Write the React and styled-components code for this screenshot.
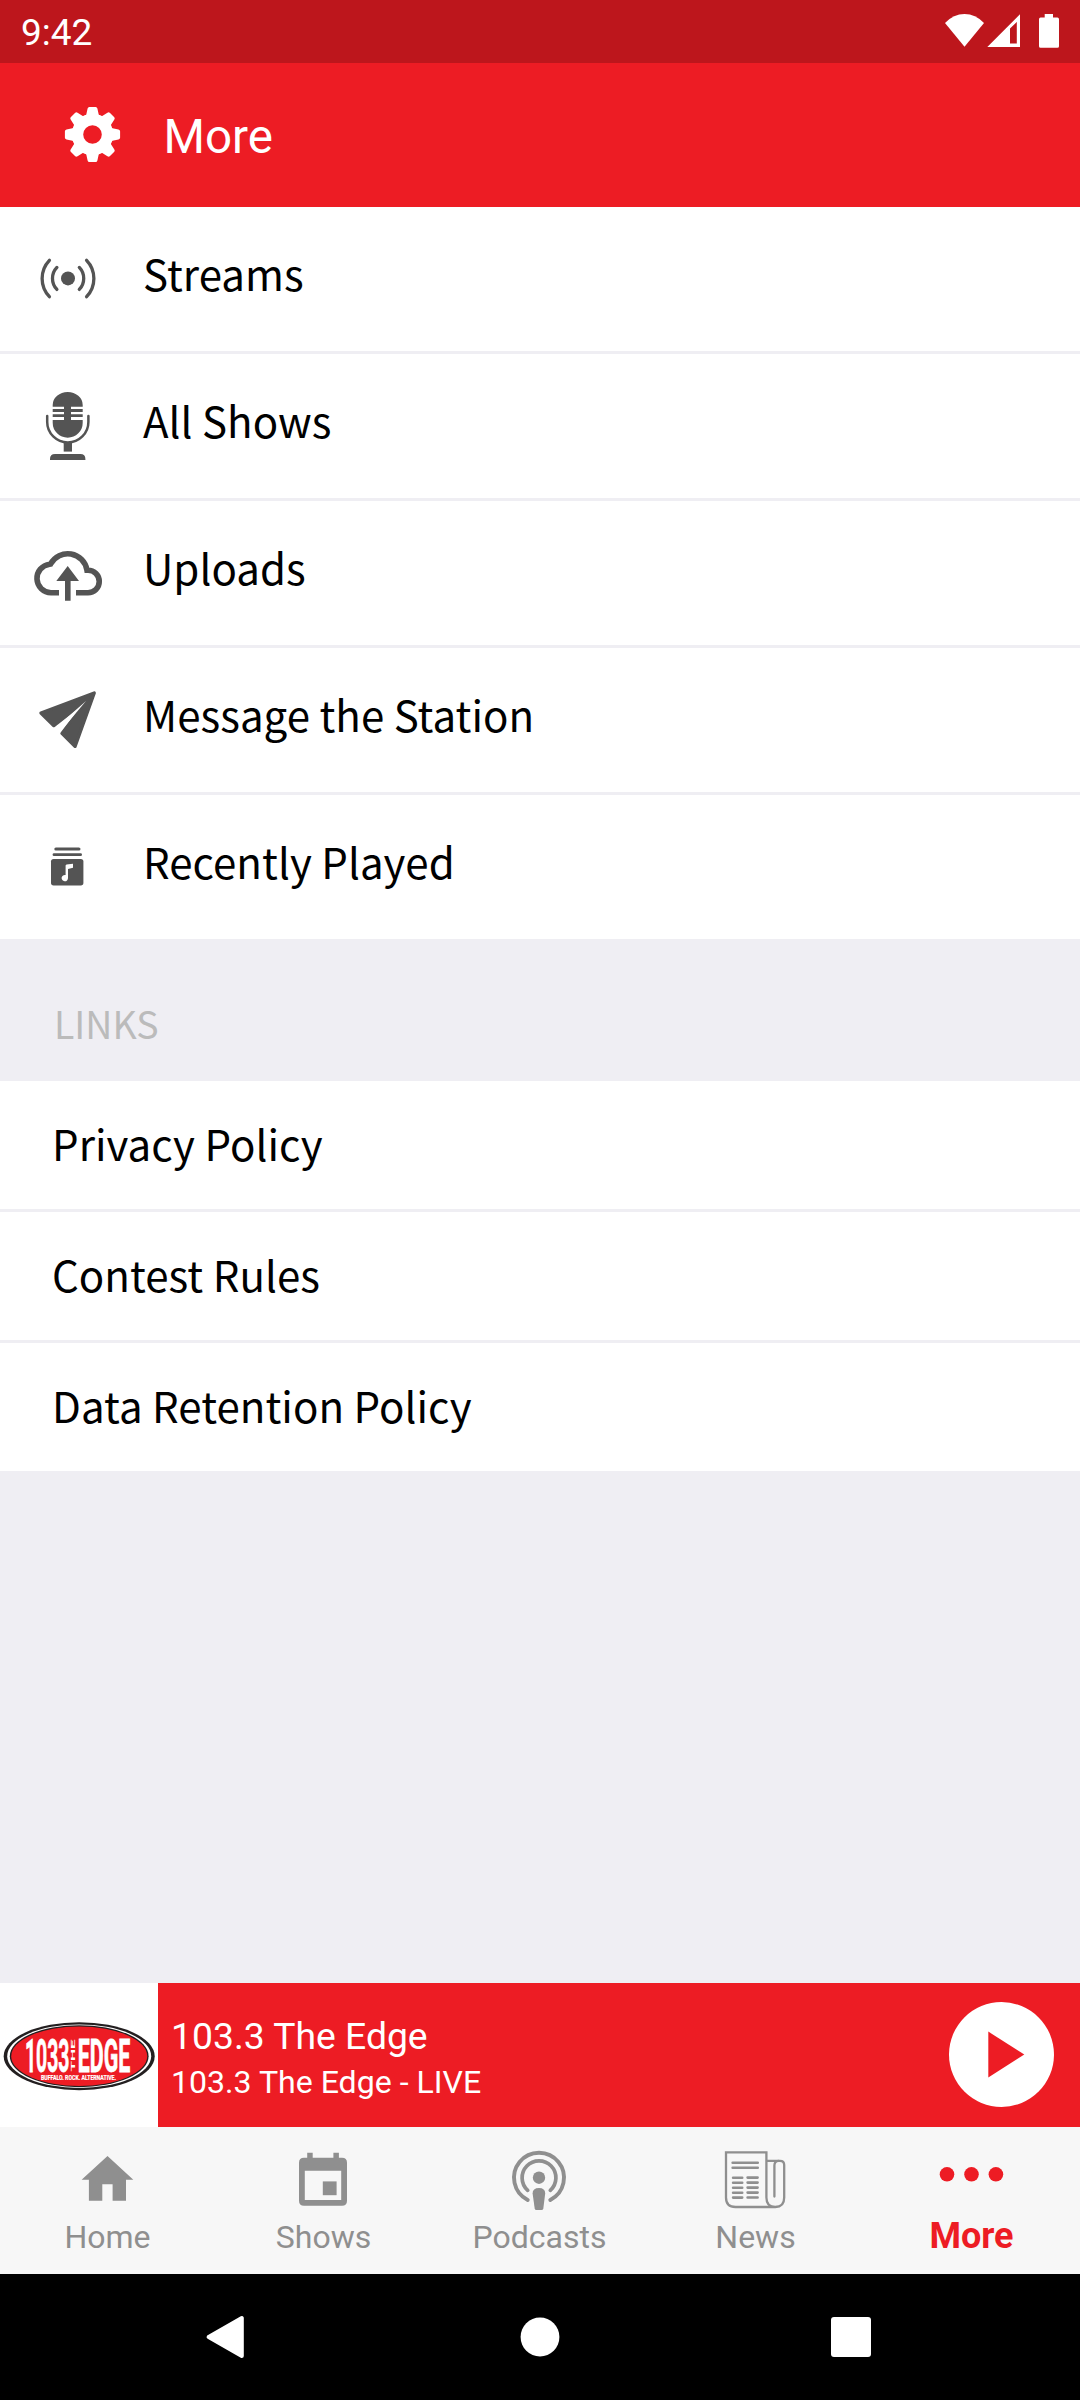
import React from "react";
import styled, { createGlobalStyle } from "styled-components";

const RED = "#ed1c24";
const GREY = "#8f8f8f";
const INK = "#545454";
const DIVIDER = "#efeef3";

const GlobalStyle = createGlobalStyle`
  *, *::before, *::after { box-sizing: border-box; }
  body { margin: 0; background: ${DIVIDER}; }
  button { border: 0; padding: 0; margin: 0; background: none; font: inherit; color: inherit; }
`;

const Screen = styled.div`
  width: 1080px;
  height: 2400px;
  display: flex;
  flex-direction: column;
  background: ${DIVIDER};
  font-family: Roboto, "Liberation Sans", sans-serif;
`;

const StatusBar = styled.div`
  height: 63px;
  flex: none;
  display: flex;
  justify-content: space-between;
  padding: 0 20px 0 21px;
  background: #bd161c;
  color: #fff;
`;

const Clock = styled.span`
  font-size: 37px;
  line-height: 42px;
  padding-top: 12px;
`;

const StatusIcons = styled.svg`
  width: 120px;
  height: 63px;
  display: block;
`;

const Header = styled.header`
  height: 144px;
  flex: none;
  display: flex;
  align-items: center;
  padding: 0 64px;
  background: ${RED};
  color: #fff;
`;

const HeaderIcon = styled.svg`
  width: 57px;
  height: 57px;
  display: block;
  margin-bottom: 1px;
`;

const HeaderTitle = styled.h1`
  margin: 3px 0 0 42.5px;
  font-size: 47.5px;
  font-weight: 400;
  line-height: 56px;
`;

const Menu = styled.ul`
  list-style: none;
  margin: 0;
  padding: 0;
  flex: none;
  display: grid;
  row-gap: 3px;
  font-family: "Noto Sans CJK JP", "Noto Sans", sans-serif;
`;

const MenuRow = styled.li`
  display: flex;
  align-items: center;
  height: ${(p) => p.$height}px;
  padding-left: ${(p) => p.$indent}px;
  background: #fff;
  color: #000;
`;

const MenuIcon = styled.svg`
  width: 80px;
  height: 80px;
  flex: none;
  display: block;
  margin-right: 36px;
`;

const MenuLabel = styled.span`
  font-size: 42px;
  line-height: 60px;
  letter-spacing: 0.05px;
  margin-bottom: ${(p) => p.$lift}px;
  white-space: nowrap;
`;

const SectionTitle = styled.h2`
  flex: none;
  height: 142px;
  margin: 0;
  padding: 56px 0 0 54px;
  font-family: "Noto Sans CJK JP", "Noto Sans", sans-serif;
  font-size: 37.5px;
  font-weight: 400;
  line-height: 56px;
  color: #bbb;
`;

const Spacer = styled.div`
  flex: 1;
`;

const Player = styled.section`
  flex: none;
  height: 144px;
  display: flex;
  align-items: center;
  background: ${RED};
  color: #fff;
`;

const Artwork = styled.div`
  width: 158px;
  height: 144px;
  background: #fff;
`;

const Logo = styled.svg`
  width: 158px;
  height: 144px;
  display: block;
`;

const TrackInfo = styled.div`
  flex: 1;
  padding: 6px 0 0 13px;
`;

const TrackTitle = styled.div`
  font-size: 37.3px;
  line-height: 46px;
  white-space: nowrap;
`;

const TrackSubtitle = styled.div`
  font-size: 32.1px;
  line-height: 44px;
  margin-top: 1px;
  white-space: nowrap;
`;

const PlayButton = styled.button`
  width: 105px;
  height: 105px;
  margin: 0 26px 1px 0;
  display: block;
`;

const TabBar = styled.nav`
  flex: none;
  height: 147px;
  display: grid;
  grid-template-columns: repeat(5, 1fr);
  background: #f7f7f7;
`;

const Tab = styled.button`
  display: flex;
  flex-direction: column;
  align-items: center;
  padding-top: 19px;
  color: ${(p) => (p.$active ? RED : GREY)};
`;

const TabIcon = styled.svg`
  width: 64px;
  height: 64px;
  display: block;
  overflow: visible;
`;

const TabLabel = styled.span`
  margin-top: ${(p) => (p.$active ? 5 : 8)}px;
  margin-right: 1px;
  font-size: ${(p) => (p.$active ? 36 : 32)}px;
  line-height: ${(p) => (p.$active ? 42 : 38)}px;
  font-weight: ${(p) => (p.$active ? 700 : 400)};
`;

const SystemBar = styled.div`
  flex: none;
  height: 126px;
  display: flex;
  align-items: center;
  justify-content: space-between;
  padding: 0 208px 0 205px;
  background: #000;
`;

const SystemIcon = styled.svg`
  width: 42px;
  height: 44px;
  display: block;
`;

const Gear = () => (
  <HeaderIcon viewBox="-28.5 -28.5 57 57" fill="#fff">
    {[0, 45, 90, 135, 180, 225, 270, 315].map((a) => (
      <path
        key={a}
        transform={`rotate(${a})`}
        d="M-7.5 -17L-6.2 -20L-4.9 -26Q-4.5 -27.6 -3.2 -27.6H3.2Q4.5 -27.6 4.9 -26L6.2 -20L7.5 -17Z"
      />
    ))}
    <circle r="15" fill="none" stroke="#fff" strokeWidth="11.4" />
  </HeaderIcon>
);

const StreamsIcon = () => (
  <MenuIcon viewBox="0 0 80 80" fill="none" stroke={INK} strokeWidth="3.3" strokeLinecap="round">
    <circle cx="41" cy="39.4" r="7" fill={INK} stroke="none" />
    <path d="M29.9 28.4A15.9 15.9 0 0 0 29.9 50.4M52.3 28.4A15.9 15.9 0 0 1 52.3 50.4" />
    <path d="M22.4 21.3A26.4 26.4 0 0 0 22.4 57.7M59.6 21.3A26.4 26.4 0 0 1 59.6 57.7" />
  </MenuIcon>
);

const MicIcon = () => (
  <MenuIcon viewBox="0 0 80 80" fill={INK}>
    <path d="M25.7 20.7V19A15 13 0 0 1 55.7 19V20.7H44V23H55.7V26H44V28.3H55.7V31H44V34H55.7V36.7A15 15 0 0 1 25.7 36.7V34H37V31H25.7V28.3H37V26H25.7V23H37V20.7Z" />
    <path
      d="M20.2 30V36A20.6 20.4 0 0 0 61.4 36V30"
      fill="none"
      stroke={INK}
      strokeWidth="2.5"
      strokeLinecap="round"
    />
    <path d="M36.7 56H45V65.6H36.7Z" />
    <path d="M23 74V73Q23 68 28 68H53.4Q58.4 68 58.4 73V74Z" />
  </MenuIcon>
);

const CloudIcon = () => (
  <MenuIcon viewBox="0 0 80 80" fill="none">
    <path
      d="M32 59.7H24A14.3 14.3 0 0 1 22.6 31.2L23.6 31A19.5 19.5 0 0 1 60 37.2H61A11.2 11.2 0 0 1 61 59.7H49"
      stroke={INK}
      strokeWidth="5.6"
    />
    <path d="M40.7 33L52 48H43.6V67.7H38V48H29.3Z" fill={INK} />
  </MenuIcon>
);

const PlaneIcon = () => (
  <MenuIcon viewBox="0 0 80 80">
    <path
      d="M14 33L67.2 13L48 66.3L35 53.4L61.3 18.6L26.7 45.6Z"
      fill={INK}
      stroke={INK}
      strokeWidth="3.4"
      strokeLinejoin="round"
    />
    <path d="M59 21L28.5 48L33 52Z" fill="#fff" />
  </MenuIcon>
);

const RecentIcon = () => (
  <MenuIcon viewBox="0 0 80 80" fill={INK}>
    <rect x="27.3" y="20.4" width="26.2" height="3.2" rx="1.6" />
    <rect x="25.6" y="26.3" width="29.4" height="2.8" rx="1.4" />
    <rect x="24" y="32" width="32.4" height="26.4" rx="2.6" />
    <path
      d="M38.6 48V38.6Q38.6 37.6 39.6 37.4L46 36.8V40.8L41 42V51A3.2 3.2 0 1 1 38.6 48Z"
      fill="#fff"
    />
  </MenuIcon>
);

const HomeIcon = () => (
  <TabIcon viewBox="0 0 64 64" fill={GREY}>
    <path d="M31.5 10L57.3 33.7H50V54.7H36.6V38.3H26.3V54.7H12.9V33.7H5.6Z" />
  </TabIcon>
);

const CalendarIcon = () => (
  <TabIcon viewBox="0 0 64 64" fill={GREY}>
    <path
      fillRule="evenodd"
      d="M15.2 6.8H20.7V11.8H41.4V6.8H46.9V11.8H50Q55 11.8 55 16.8V54.7Q55 59.7 50 59.7H12Q7 59.7 7 54.7V16.8Q7 11.8 12 11.8H15.2ZM12.8 24.8V54H49.2V24.8Z"
    />
    <rect x="30.8" y="35.4" width="13.8" height="13.8" />
  </TabIcon>
);

const PodcastIcon = () => (
  <TabIcon viewBox="0 0 64 64" fill="none" stroke={GREY} strokeLinecap="round">
    <path d="M19.7 54A25 25 0 1 1 42.3 54" strokeWidth="3.9" />
    <path d="M19.7 44.3A16.9 16.9 0 1 1 42.3 44.3" strokeWidth="3.7" />
    <circle cx="31" cy="31.7" r="6.2" fill={GREY} stroke="none" />
    <path
      d="M24.6 47.5Q24.6 42 31 42Q37.2 42 37.2 47.5L35.3 62.5Q35 64 33.5 64H28.4Q27 64 26.7 62.5Z"
      fill={GREY}
      stroke="none"
    />
  </TabIcon>
);

const NewsIcon = () => (
  <TabIcon viewBox="0 0 64 64" fill="none" stroke={GREY} strokeWidth="2.3">
    <path d="M51.3 61H11.5Q2 61 2 51.5V6.3H42.4V51.5Q42.4 61 51.3 61Q60.2 61 60.2 51.5V19Q60.2 14.8 56 14.8H42.4" />
    <path d="M50.4 50.5V19.5Q50.4 15 54.5 14.8" strokeLinecap="round" />
    <path d="M8.6 16.7H33.8M8.6 21.7H33.8" strokeWidth="2.5" strokeLinecap="round" />
    {[31.7, 36.7, 41.7, 46.7, 51.6].map((y) => (
      <path
        key={y}
        d={`M9.1 ${y}H18.2M23.6 ${y - 0.1}H33.6`}
        strokeWidth="2.6"
        strokeLinecap="round"
      />
    ))}
  </TabIcon>
);

const DotsIcon = () => (
  <TabIcon viewBox="0 0 64 64" fill={RED}>
    <circle cx="7" cy="28.3" r="7.3" />
    <circle cx="31.5" cy="28.3" r="7.3" />
    <circle cx="55.9" cy="28.3" r="7.3" />
  </TabIcon>
);

const StationLogo = () => (
  <Logo viewBox="0 0 158 144">
    <ellipse cx="79.2" cy="73.2" rx="75.5" ry="34" fill="#231f20" />
    <ellipse cx="79.2" cy="73.2" rx="72" ry="31.8" fill="#fff" />
    <ellipse cx="79.2" cy="73.2" rx="69.4" ry="31" fill="#231f20" />
    <ellipse cx="79.2" cy="73.2" rx="68" ry="29.8" fill={RED} />
    <g
      fill="#fff"
      stroke="#fff"
      fontFamily='Roboto, "Liberation Sans", sans-serif'
      fontWeight="700"
    >
      <text
        transform="translate(25 89.3) scale(1 1.55)"
        fontSize="30"
        strokeWidth="0.5"
        textLength="44.5"
        lengthAdjust="spacingAndGlyphs"
      >
        1033
      </text>
      <text
        transform="translate(77.8 89.3) scale(1 1.55)"
        fontSize="30"
        strokeWidth="0.5"
        textLength="52.6"
        lengthAdjust="spacingAndGlyphs"
      >
        EDGE
      </text>
      <text
        transform="translate(75.4 88.5) rotate(-90)"
        fontSize="5.4"
        strokeWidth="0"
        textLength="32"
        lengthAdjust="spacingAndGlyphs"
      >
        THE
      </text>
      <text
        x="41"
        y="96.6"
        fontSize="6.4"
        strokeWidth="0.2"
        textLength="75"
        lengthAdjust="spacingAndGlyphs"
      >
        BUFFALO. ROCK. ALTERNATIVE.
      </text>
    </g>
  </Logo>
);

const MENU = [
  { label: "Streams", Icon: StreamsIcon },
  { label: "All Shows", Icon: MicIcon },
  { label: "Uploads", Icon: CloudIcon },
  { label: "Message the Station", Icon: PlaneIcon },
  { label: "Recently Played", Icon: RecentIcon },
];

const LINKS = ["Privacy Policy", "Contest Rules", "Data Retention Policy"];

const TABS = [
  { label: "Home", Icon: HomeIcon },
  { label: "Shows", Icon: CalendarIcon },
  { label: "Podcasts", Icon: PodcastIcon },
  { label: "News", Icon: NewsIcon },
  { label: "More", Icon: DotsIcon, active: true },
];

export default function App() {
  return (
    <>
      <GlobalStyle />
      <Screen>
        <StatusBar>
          <Clock>9:42</Clock>
          <StatusIcons viewBox="940 0 120 63" fill="#fff">
            <path d="M945 23Q953.5 14 964.5 14T984 23L964.5 46.7Z" />
            <path
              fillRule="evenodd"
              d="M1020 14.3V47H987.3ZM1010 28.5V43.5H1016.8V22Z"
            />
            <path d="M1044.7 14H1053V17.6H1057.4Q1059 17.6 1059 19.2V46.2Q1059 47.8 1057.4 47.8H1040.6Q1039 47.8 1039 46.2V19.2Q1039 17.6 1040.6 17.6H1044.7Z" />
          </StatusIcons>
        </StatusBar>

        <Header>
          <Gear />
          <HeaderTitle>More</HeaderTitle>
        </Header>

        <Menu>
          {MENU.map(({ label, Icon }) => (
            <MenuRow key={label} $height={144} $indent={27}>
              <Icon />
              <MenuLabel $lift={12}>{label}</MenuLabel>
            </MenuRow>
          ))}
        </Menu>

        <SectionTitle>LINKS</SectionTitle>

        <Menu>
          {LINKS.map((label) => (
            <MenuRow key={label} $height={128} $indent={52}>
              <MenuLabel $lift={4}>{label}</MenuLabel>
            </MenuRow>
          ))}
        </Menu>

        <Spacer />

        <Player>
          <Artwork>
            <StationLogo />
          </Artwork>
          <TrackInfo>
            <TrackTitle>103.3 The Edge</TrackTitle>
            <TrackSubtitle>103.3 The Edge - LIVE</TrackSubtitle>
          </TrackInfo>
          <PlayButton aria-label="Play">
            <svg viewBox="0 0 105 105" width="105" height="105" display="block">
              <circle cx="52.5" cy="52.5" r="52.5" fill="#fff" />
              <path d="M39.3 29.6L75.3 52.5L39.3 75.4Z" fill={RED} />
            </svg>
          </PlayButton>
        </Player>

        <TabBar>
          {TABS.map(({ label, Icon, active }) => (
            <Tab key={label} $active={active}>
              <Icon />
              <TabLabel $active={active}>{label}</TabLabel>
            </Tab>
          ))}
        </TabBar>

        <SystemBar>
          <SystemIcon viewBox="0 0 42 44">
            <path
              d="M3.6 22L36.8 3V41Z"
              fill="#fff"
              stroke="#fff"
              strokeWidth="4"
              strokeLinejoin="round"
            />
          </SystemIcon>
          <SystemIcon viewBox="0 0 42 44">
            <circle cx="22" cy="22" r="19.4" fill="#fff" />
          </SystemIcon>
          <SystemIcon viewBox="0 0 42 44">
            <rect x="1" y="2" width="40" height="40" rx="3" fill="#fff" />
          </SystemIcon>
        </SystemBar>
      </Screen>
    </>
  );
}
